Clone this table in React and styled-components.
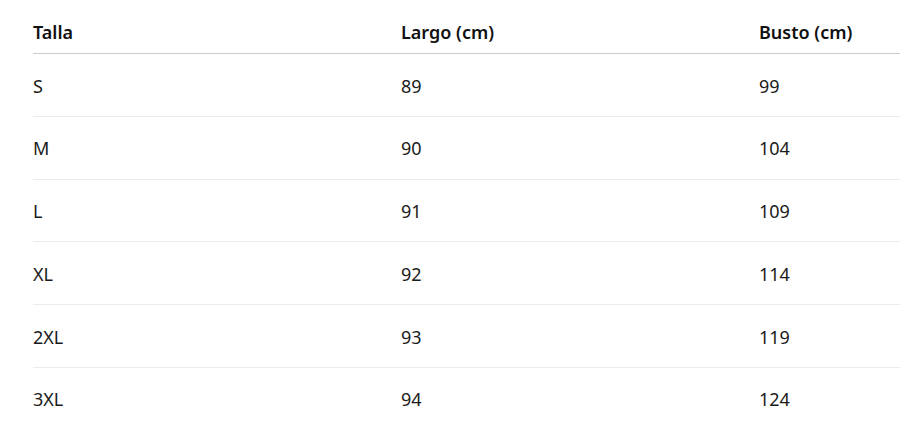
import React from 'react';
import styled, { createGlobalStyle } from 'styled-components';

const GlobalStyle = createGlobalStyle`
  html, body {
    margin: 0;
    padding: 0;
    background: #ffffff;
  }
  body {
    font-family: 'Noto Sans', 'Open Sans', Arial, sans-serif;
    color: #1b1b1b;
  }
`;

const Page = styled.div`
  padding: 11px 0 0 33px;
  width: 900px;
  box-sizing: border-box;
  overflow: hidden;
`;

const SizeTable = styled.table`
  width: 867px;
  border-collapse: collapse;
  table-layout: fixed;
  font-size: 18px;
  line-height: 26px;
`;

const HeadCell = styled.th`
  text-align: left;
  font-weight: 600;
  color: #111111;
  padding: 8px 0;
  border-bottom: 1px solid #cccccc;
  width: ${({ w }) => (w ? `${w}px` : 'auto')};
`;

const Row = styled.tr`
  border-bottom: ${({ last }) => (last ? 'none' : '1px solid #ececec')};
`;

const Cell = styled.td`
  padding: 19.5px 0 16.5px;
  line-height: 25.75px;
  font-weight: 400;
`;

const sizes = [
  ['S', 89, 99],
  ['M', 90, 104],
  ['L', 91, 109],
  ['XL', 92, 114],
  ['2XL', 93, 119],
  ['3XL', 94, 124],
];

export default function App() {
  return (
    <>
      <GlobalStyle />
      <Page>
        <SizeTable>
          <thead>
            <tr>
              <HeadCell w={368}>Talla</HeadCell>
              <HeadCell w={358}>Largo (cm)</HeadCell>
              <HeadCell>Busto (cm)</HeadCell>
            </tr>
          </thead>
          <tbody>
            {sizes.map(([talla, largo, busto], i) => (
              <Row key={talla} last={i === sizes.length - 1}>
                <Cell>{talla}</Cell>
                <Cell>{largo}</Cell>
                <Cell>{busto}</Cell>
              </Row>
            ))}
          </tbody>
        </SizeTable>
      </Page>
    </>
  );
}
